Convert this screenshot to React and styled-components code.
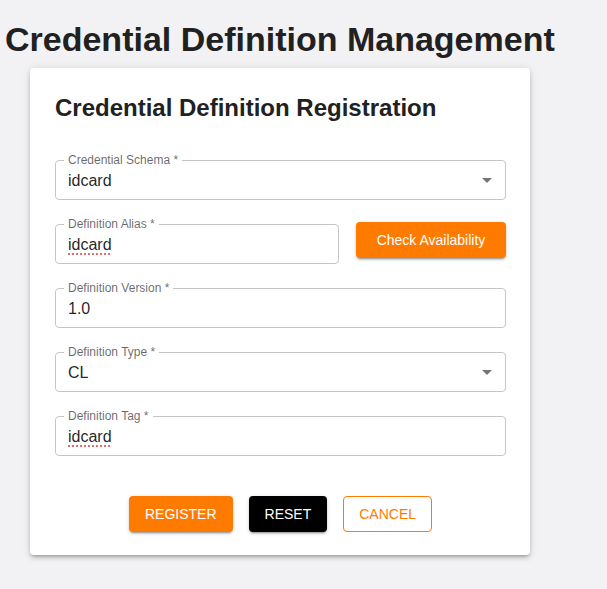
import React from "react";
import styled, { createGlobalStyle } from "styled-components";

const GlobalStyle = createGlobalStyle`
    html, body {
        margin: 0;
        padding: 0;
        background: #f2f2f4;
        font-family: "Liberation Sans", Arial, Helvetica, sans-serif;
    }
`;

const Page = styled.main`
    min-height: 589px;
    padding: 20px 0 0 5px;
    box-sizing: border-box;
`;

const Heading = styled.h1`
    margin: 0 0 9px;
    font-size: 34px;
    font-weight: bold;
    line-height: 39px;
    color: #212121;
`;

const Card = styled.section`
    width: 500px;
    margin-left: 25px;
    box-sizing: border-box;
    padding: 26px 24px 23px 25px;
    background: #fff;
    border-radius: 4px;
    box-shadow: 0px 3px 3px -2px rgba(0, 0, 0, 0.2),
        0px 3px 4px 0px rgba(0, 0, 0, 0.14),
        0px 1px 8px 0px rgba(0, 0, 0, 0.12);
`;

const CardTitle = styled.h2`
    margin: 0;
    font-size: 24px;
    font-weight: bold;
    line-height: 28px;
    color: #212121;
`;

const Form = styled.form`
    display: flex;
    flex-direction: column;
    gap: 24px;
    margin-top: 38px;
`;

const Row = styled.div`
    display: flex;
    align-items: flex-start;
    gap: 17px;
`;

const FieldBox = styled.div`
    position: relative;
    flex: 1 0 auto;
    min-width: 0;
    display: flex;
    align-items: center;
    height: 40px;
    box-sizing: border-box;
    border: 1px solid #c4c4c4;
    border-radius: 4px;
    padding: 0 6px 0 12px;
    background: #fff;
`;

const FieldLabel = styled.label`
    position: absolute;
    top: -8px;
    left: 8px;
    padding: 0 4px;
    background: #fff;
    font-size: 12px;
    line-height: 14px;
    color: rgba(0, 0, 0, 0.6);
`;

const Input = styled.input`
    flex: 1;
    min-width: 0;
    width: 100px;
    border: none;
    outline: none;
    padding: 0;
    background: transparent;
    font-family: inherit;
    font-size: 16px;
    line-height: 23px;
    color: rgba(0, 0, 0, 0.87);
    text-decoration: ${(props) => (props.$misspelled ? "underline dotted #e04848" : "none")};
    text-underline-offset: 4px;
`;

const SelectValue = styled.div`
    flex: 1;
    font-size: 16px;
    line-height: 23px;
    color: rgba(0, 0, 0, 0.87);
`;

const Arrow = styled.svg`
    width: 24px;
    height: 24px;
    fill: rgba(0, 0, 0, 0.54);
`;

const Button = styled.button`
    height: 36px;
    box-sizing: border-box;
    border-radius: 4px;
    font-family: inherit;
    font-size: 14px;
    line-height: 24px;
    cursor: pointer;
    border: ${(props) => (props.$variant === "outlined" ? "1px solid #ff7b00" : "none")};
    padding: ${(props) => (props.$variant === "outlined" ? "0 15px" : "0 16px")};
    color: ${(props) => (props.$variant === "outlined" ? "#ff7b00" : "#fff")};
    background: ${(props) =>
        props.$variant === "outlined" ? "#fff" : props.$variant === "dark" ? "#000" : "#ff7b00"};
    box-shadow: ${(props) =>
        props.$variant === "outlined"
            ? "none"
            : "0px 3px 1px -2px rgba(0,0,0,0.2), 0px 2px 2px 0px rgba(0,0,0,0.14), 0px 1px 5px 0px rgba(0,0,0,0.12)"};
`;

const CheckButton = styled(Button)`
    flex: none;
    width: 150px;
    margin-top: -2px;
`;

const Actions = styled.div`
    display: flex;
    justify-content: center;
    gap: 16px;
    margin-top: 40px;
`;

function TextField({ label, value, misspelled }) {
    return (
        <FieldBox>
            <FieldLabel>{label} *</FieldLabel>
            <Input defaultValue={value} $misspelled={misspelled} />
        </FieldBox>
    );
}

function SelectField({ label, value }) {
    return (
        <FieldBox>
            <FieldLabel>{label} *</FieldLabel>
            <SelectValue>{value}</SelectValue>
            <Arrow viewBox="0 0 24 24">
                <path d="M7 10l5 5 5-5z" />
            </Arrow>
        </FieldBox>
    );
}

export default function App() {
    return (
        <Page>
            <GlobalStyle />
            <Heading>Credential Definition Management</Heading>
            <Card>
                <CardTitle>Credential Definition Registration</CardTitle>
                <Form onSubmit={(e) => e.preventDefault()}>
                    <SelectField label="Credential Schema" value="idcard" />
                    <Row>
                        <TextField label="Definition Alias" value="idcard" misspelled />
                        <CheckButton type="button">Check Availability</CheckButton>
                    </Row>
                    <TextField label="Definition Version" value="1.0" />
                    <SelectField label="Definition Type" value="CL" />
                    <TextField label="Definition Tag" value="idcard" misspelled />
                </Form>
                <Actions>
                    <Button type="button">REGISTER</Button>
                    <Button type="button" $variant="dark">RESET</Button>
                    <Button type="button" $variant="outlined">CANCEL</Button>
                </Actions>
            </Card>
        </Page>
    );
}
